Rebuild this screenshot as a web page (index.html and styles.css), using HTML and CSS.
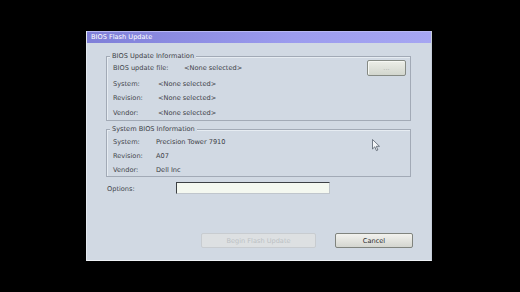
FILE: index.html
```html
<!DOCTYPE html>
<html>
<head>
<meta charset="utf-8">
<link rel="stylesheet" href="styles.css">
</head>
<body>
<div class="window">
  <div class="titlebar">BIOS Flash Update</div>
  <div class="content">
    <div class="group g1">
      <span class="legend">BIOS Update Information</span>
      <div class="row r-file">
        <span class="lbl w-file">BIOS update file:</span>
        <span class="val">&lt;None selected&gt;</span>
        <button class="btn browse">...</button>
      </div>
      <div class="row"><span class="lbl w45">System:</span><span class="val">&lt;None selected&gt;</span></div>
      <div class="row"><span class="lbl w45">Revision:</span><span class="val">&lt;None selected&gt;</span></div>
      <div class="row r-last"><span class="lbl w45">Vendor:</span><span class="val">&lt;None selected&gt;</span></div>
    </div>
    <div class="group g2">
      <span class="legend">System BIOS Information</span>
      <div class="row"><span class="lbl w43">System:</span><span class="val">Precision Tower 7910</span></div>
      <div class="row"><span class="lbl w43">Revision:</span><span class="val">A07</span></div>
      <div class="row"><span class="lbl w43">Vendor:</span><span class="val">Dell Inc</span></div>
    </div>
    <div class="options">
      <span class="lbl w-opt">Options:</span>
      <div class="input"></div>
    </div>
    <div class="actions">
      <button class="btn begin" disabled>Begin Flash Update</button>
      <button class="btn cancel">Cancel</button>
    </div>
  </div>
  <svg class="cursor" width="9" height="13" viewBox="0 0 9 13">
    <path d="M0.5 0.5 L0.5 10 L2.8 7.8 L4.4 11.6 L5.9 11 L4.3 7.3 L7.5 7.3 Z" fill="#f4f6f8" stroke="#55606c" stroke-width="0.8" stroke-linejoin="round"/>
  </svg>
</div>
</body>
</html>
```

FILE: styles.css
```css
html, body {
  margin: 0;
  padding: 0;
  background: #000;
  width: 520px;
  height: 292px;
  overflow: hidden;
}
body {
  font-family: "DejaVu Sans", Verdana, sans-serif;
  font-size: 6.6px;
  color: #3a3e44;
}
.window {
  position: relative;
  margin: 31px 0 0 86px;
  width: 346px;
  height: 230px;
  background: #d1d9e3;
  box-sizing: border-box;
  border-left: 1px solid #e4eaf0;
  border-bottom: 1px solid #eef2f6;
  border-right: 1px solid #c4ccd8;
}
.titlebar {
  height: 12px;
  line-height: 11px;
  padding-left: 4px;
  color: #fff;
  background: linear-gradient(to right, #7f7fd8, #9c9cee 60%, #a6a6f2);
  border-top: 1px solid #b8b8f4;
  box-sizing: border-box;
}
.content {
  padding: 13px 20px 0 19px;
  display: flex;
  flex-direction: column;
}
.group {
  position: relative;
  border: 1px solid #a2aab6;
  box-shadow: inset 1px 1px 0 #e6ecf2;
  display: flex;
  flex-direction: column;
}
.legend {
  position: absolute;
  top: -5px;
  left: 3px;
  padding: 0 2px;
  line-height: 9px;
  background: #d1d9e3;
  color: #3c4046;
}
.g1 {
  height: 65px;
  box-sizing: border-box;
  padding: 2px 4px 1px 6px;
}
.g2 {
  margin-top: 8px;
  height: 48px;
  box-sizing: border-box;
  padding: 4px 4px 0 6px;
}
.row {
  height: 14px;
  display: flex;
  align-items: center;
}
.row .lbl, .row .val {
  padding-top: 2px;
}
.r-last { height: 15px; }
.r-file {
  height: 17px;
  align-items: flex-end;
}
.r-file .lbl, .r-file .val {
  align-self: center;
  padding-top: 0;
}
.lbl { flex: none; color: #42464c; }
.val { color: #3c4046; }
.w-file { width: 71px; }
.w45 { width: 45px; }
.w43 { width: 43px; }
.w-opt { width: 69px; }
.btn {
  font-family: inherit;
  font-size: 6.6px;
  padding: 0;
  margin: 0;
  box-sizing: border-box;
  border-radius: 2px;
  cursor: default;
}
.browse {
  margin-left: auto;
  width: 39px;
  height: 16px;
  border: 1px solid #858a84;
  background: linear-gradient(to bottom, #eceee8, #d2d6ce);
  color: #b0b4ae;
  box-shadow: inset 1px 1px 0 #f6f8f4;
}
.options {
  margin-top: 5px;
  padding-left: 1px;
  height: 12px;
  display: flex;
  align-items: center;
}
.options .lbl { padding-top: 2px; }
.input {
  width: 154px;
  height: 12px;
  box-sizing: border-box;
  background: #f4f8f0;
  border-top: 1px solid #3c4044;
  border-left: 1px solid #3c4044;
  border-right: 1px solid #c0c6cc;
  border-bottom: 1px solid #c0c6cc;
}
.actions {
  margin-top: 39px;
  display: flex;
  justify-content: flex-end;
  gap: 19px;
  margin-right: -2px;
}
.begin {
  width: 115px;
  height: 15px;
  border: 1px solid #c8ccd0;
  background: #dde0e2;
  color: #bcc0c4;
}
.cancel {
  width: 78px;
  height: 15px;
  border: 1px solid #80847e;
  background: linear-gradient(to bottom, #f2f2ee, #d4d6d0);
  color: #2a2c2e;
}
.cursor {
  position: absolute;
  left: 285px;
  top: 108px;
}
```
